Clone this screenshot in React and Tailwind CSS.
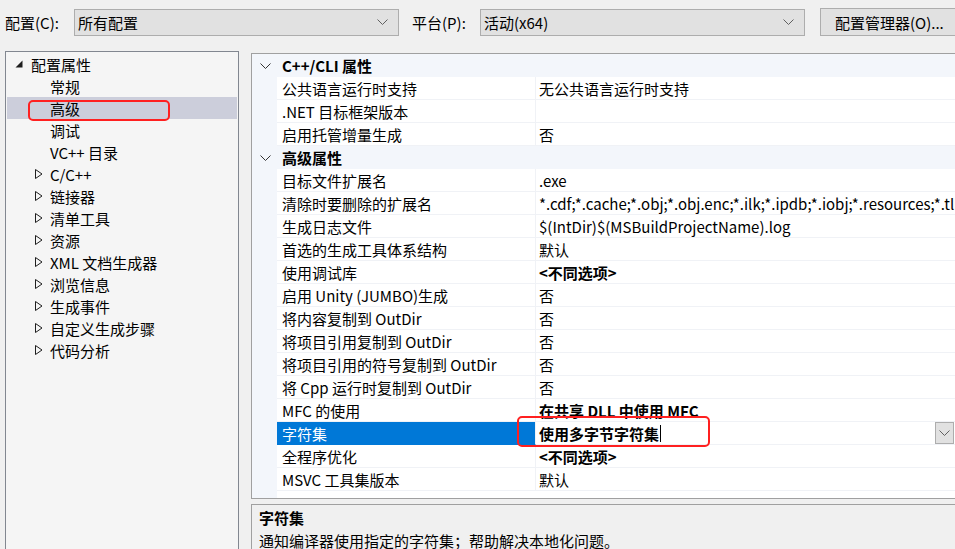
import React from 'react';

const treeItems = [
    { label: '常规', arrow: false },
    { label: '高级', arrow: false, selected: true },
    { label: '调试', arrow: false },
    { label: 'VC++ 目录', arrow: false },
    { label: 'C/C++', arrow: true },
    { label: '链接器', arrow: true },
    { label: '清单工具', arrow: true },
    { label: '资源', arrow: true },
    { label: 'XML 文档生成器', arrow: true },
    { label: '浏览信息', arrow: true },
    { label: '生成事件', arrow: true },
    { label: '自定义生成步骤', arrow: true },
    { label: '代码分析', arrow: true },
];

const groups = [
    {
        title: 'C++/CLI 属性',
        rows: [
            ['公共语言运行时支持', '无公共语言运行时支持'],
            ['.NET 目标框架版本', ''],
            ['启用托管增量生成', '否'],
        ],
    },
    {
        title: '高级属性',
        rows: [
            ['目标文件扩展名', '.exe'],
            ['清除时要删除的扩展名', '*.cdf;*.cache;*.obj;*.obj.enc;*.ilk;*.ipdb;*.iobj;*.resources;*.tlb;*.tli;*.tlh'],
            ['生成日志文件', '$(IntDir)$(MSBuildProjectName).log'],
            ['首选的生成工具体系结构', '默认'],
            ['使用调试库', '<不同选项>', 'bold'],
            ['启用 Unity (JUMBO)生成', '否'],
            ['将内容复制到 OutDir', '否'],
            ['将项目引用复制到 OutDir', '否'],
            ['将项目引用的符号复制到 OutDir', '否'],
            ['将 Cpp 运行时复制到 OutDir', '否'],
            ['MFC 的使用', '在共享 DLL 中使用 MFC', 'bold'],
            ['字符集', '使用多字节字符集', 'selected'],
            ['全程序优化', '<不同选项>', 'bold'],
            ['MSVC 工具集版本', '默认'],
        ],
    },
];

const Chevron = ({ className }) => (
    <svg width="11" height="6" viewBox="0 0 11 6" className={className}>
        <polyline points="0.5,0.5 5.5,5.5 10.5,0.5" fill="none" stroke="currentColor" strokeWidth="1" />
    </svg>
);

const Combo = ({ value, width }) => (
    <div className={`flex items-center h-[27px] bg-[#e1e1e1] border border-[#adadad] pl-[3px] pr-[10px] ${width}`}>
        <span className="flex-1 whitespace-nowrap">{value}</span>
        <Chevron className="text-[#606060]" />
    </div>
);

const TreeRow = ({ item }) => (
    <div className={`flex items-center h-[22px] ${item.selected ? 'bg-[#cccedb]' : ''}`}>
        <div className="w-[43px] flex justify-end pr-[7px]">
            {item.arrow && (
                <svg width="8" height="10" viewBox="0 0 8 10">
                    <polygon points="0.5,0.5 7,5 0.5,9.5" fill="none" stroke="#1e1e1e" strokeWidth="1" />
                </svg>
            )}
        </div>
        <span>{item.label}</span>
    </div>
);

const PropRow = ({ row }) => {
    const [name, value, kind] = row;
    const selected = kind === 'selected';
    return (
        <div className="flex h-[23px]">
            <div className="w-[25px] shrink-0 bg-[#f3f6fb]" />
            <div className={`w-[259px] shrink-0 flex items-center pl-[5px] border-b border-r border-[#f0f2f6] ${selected ? 'bg-[#0078d7] text-white border-b-[#0078d7]' : 'bg-white'}`}>
                <span className="whitespace-nowrap">{name}</span>
            </div>
            <div className={`flex-1 flex items-center pl-[3px] border-b border-[#f0f2f6] bg-white ${kind ? 'font-bold' : ''}`}>
                <span className="whitespace-nowrap">{value}</span>
                {selected && <span className="w-px h-[17px] bg-black ml-[1px]" />}
                {selected && (
                    <div className="ml-auto mr-[16px] w-[19px] h-[22px] bg-[#e1e1e1] border border-[#adadad] flex items-center justify-center">
                        <Chevron className="text-[#606060]" />
                    </div>
                )}
            </div>
        </div>
    );
};

export default function App() {
    return (
        <div className="relative w-[955px] h-[549px] overflow-hidden bg-[#f0f0f0] text-[15px] text-black font-['Noto_Sans_CJK_SC',sans-serif] leading-none">
            {/* toolbar */}
            <div className="flex items-center pt-[8px] pl-[5px] w-[1000px]">
                <span className="w-[69px]">配置(C):</span>
                <Combo value="所有配置" width="w-[325px]" />
                <span className="ml-[13px] w-[68px]">平台(P):</span>
                <Combo value="活动(x64)" width="w-[325px]" />
                <div className="ml-[15px] w-[140px] h-[28px] bg-[#e1e1e1] border border-[#adadad] flex items-center pl-[14px] whitespace-nowrap">
                    配置管理器(O)...
                </div>
            </div>

            <div className="flex mt-[15px] w-[1000px]">
                {/* tree */}
                <div className="ml-[5px] w-[234px] h-[520px] shrink-0 bg-[#f5f5f5] border border-[#828790] p-[1px]">
                    <div className="flex items-center h-[22px]">
                        <div className="w-[24px] pl-[8px]">
                            <svg width="8" height="8" viewBox="0 0 8 8">
                                <polygon points="7.5,0.5 7.5,7.5 0.5,7.5" fill="#1e1e1e" />
                            </svg>
                        </div>
                        <span>配置属性</span>
                    </div>
                    {treeItems.map((item) => (
                        <TreeRow key={item.label} item={item} />
                    ))}
                </div>

                {/* property grid + description */}
                <div className="ml-[12px] mt-[2px] w-[720px] flex flex-col">
                    <div className="h-[446px] border border-[#a0a0a0] bg-white flex flex-col">
                        {groups.map((g) => (
                            <div key={g.title}>
                                <div className="flex items-center h-[23px] bg-[#f3f6fb] font-bold">
                                    <div className="w-[25px] pl-[8px]">
                                        <Chevron className="text-[#333]" />
                                    </div>
                                    <span className="pl-[5px]">{g.title}</span>
                                </div>
                                {g.rows.map((r) => (
                                    <PropRow key={r[0]} row={r} />
                                ))}
                            </div>
                        ))}
                        <div className="flex-1 flex">
                            <div className="w-[25px] bg-[#f3f6fb]" />
                        </div>
                    </div>
                    <div className="mt-[5px] h-[60px] border border-[#a0a0a0] bg-[#f0f0f0] pl-[7px] pt-[1px]">
                        <div className="font-bold h-[23px] flex items-center">字符集</div>
                        <div className="h-[23px] flex items-center">通知编译器使用指定的字符集；帮助解决本地化问题。</div>
                    </div>
                </div>
            </div>

            {/* red annotation boxes */}
            <div className="absolute left-[28px] top-[100px] w-[142px] h-[21px] border-2 border-[#ff2020] rounded-[5px]" />
            <div className="absolute left-[517px] top-[416px] w-[193px] h-[31px] border-2 border-[#ff2020] rounded-[5px]" />
        </div>
    );
}
